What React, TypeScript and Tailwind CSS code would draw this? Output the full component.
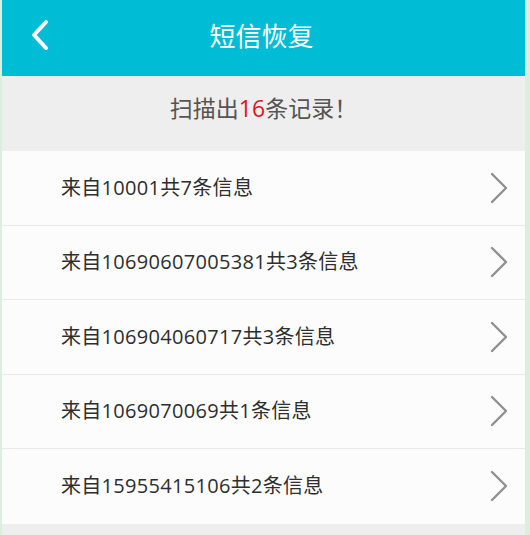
import React from "react";

const rows = [
  "来自10001共7条信息",
  "来自10690607005381共3条信息",
  "来自106904060717共3条信息",
  "来自1069070069共1条信息",
  "来自15955415106共2条信息",
];

function Chevron() {
  return (
    <svg width="18" height="32" viewBox="0 0 18 32" className="shrink-0">
      <path d="M2 2 L16 16 L2 30" fill="none" stroke="#909090" strokeWidth="2.4" strokeLinecap="round" strokeLinejoin="round" />
    </svg>
  );
}

export default function App() {
  return (
    <div
      className="w-[530px] h-[535px] bg-[#dcefdf] pl-[2px] pr-[5px] overflow-hidden"
      style={{ fontFamily: '"Open Sans", "Noto Sans CJK SC", sans-serif' }}
    >
      <div className="h-full flex flex-col bg-[#eeeeee]">
        <div className="h-[76px] bg-[#00bcd5] flex items-center relative">
          <svg width="24" height="32" viewBox="0 0 24 32" className="absolute left-[26px] top-[19px]">
            <path d="M18 3 L6 16 L18 29" fill="none" stroke="#ffffff" strokeWidth="4" strokeLinecap="round" strokeLinejoin="round" />
          </svg>
          <div className="flex-1 text-center text-white text-[26px] leading-none pb-[5px] pr-[4px]">短信恢复</div>
        </div>
        <div className="h-[75px] flex items-center justify-center text-[23px] text-[#555555] pb-[10px]">
          <span>
            扫描出<span className="text-[#e0141e]">16</span>条记录！
          </span>
        </div>
        <div className="bg-[#fcfcfc]">
          {rows.map((r, i) => (
            <div
              key={i}
              className={`h-[74.5px] flex items-center pl-[59px] pr-[17px] ${i < rows.length - 1 ? "border-b border-[#e9e9e9]" : ""}`}
            >
              <div className="flex-1 text-[20px] tracking-[0.3px] text-[#2e2e2e]">{r}</div>
              <Chevron />
            </div>
          ))}
        </div>
      </div>
    </div>
  );
}
